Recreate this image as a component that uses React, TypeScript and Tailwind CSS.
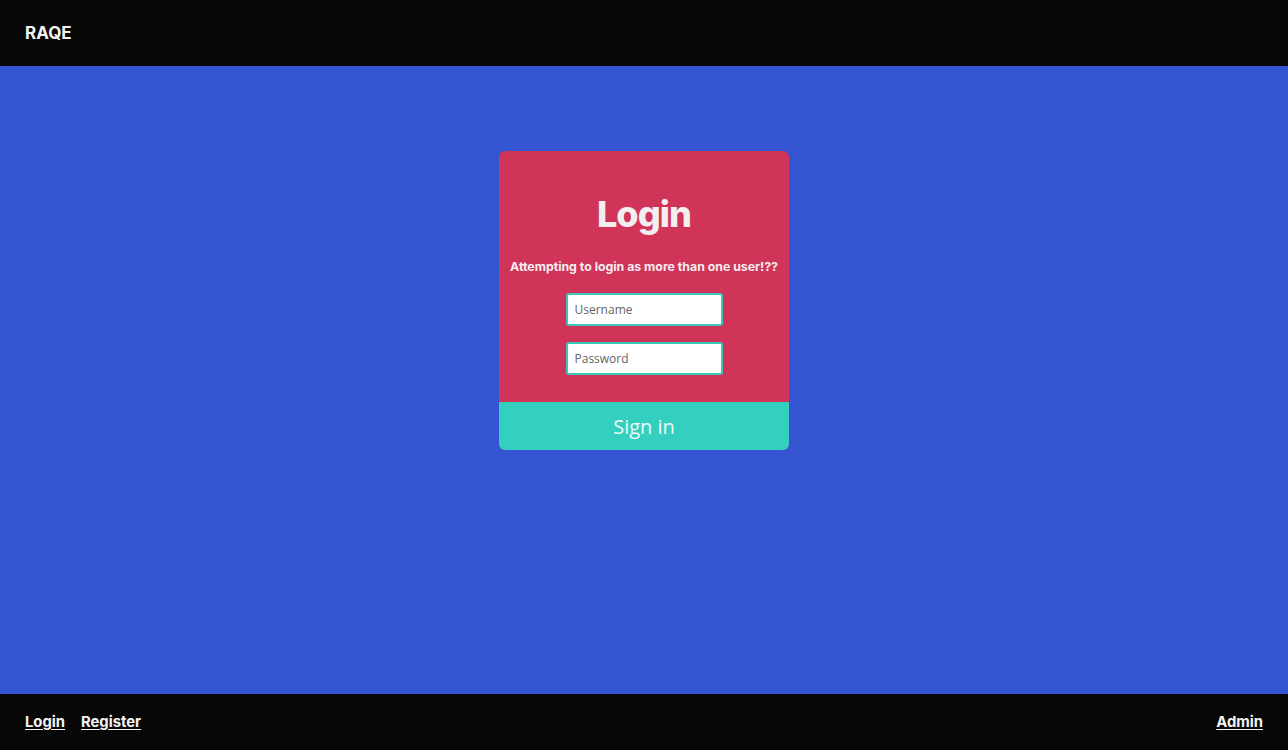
import React from "react";

export default function App() {
  const font = { fontFamily: "Inter, 'Noto Sans', sans-serif" };
  return (
    <div className="flex flex-col h-[750px] w-full bg-[#3555d2]" style={font}>
      <header className="h-[66px] bg-[#070707] flex items-center px-[25px] pt-[1px] shrink-0">
        <span className="text-[#f3f3f3] font-bold text-[17px] tracking-normal">RAQE</span>
      </header>
      <main className="flex-1 flex justify-center pt-[85px]">
        <div className="w-[290px] h-[299px] rounded-[6px] overflow-hidden bg-[#d03459] flex flex-col">
          <div className="flex-1 flex flex-col items-center">
            <h1 className="mt-[41px] text-[36px] leading-[44px] font-extrabold text-[#f3eef0] tracking-tight">Login</h1>
            <p className="mt-[22px] text-[12.3px] leading-[18px] font-bold text-[#f3eef0] whitespace-nowrap">Attempting to login as more than one user!??</p>
            <input
              placeholder="Username"
              className="mt-[17px] w-[157px] h-[33px] rounded-[3px] border-2 border-[#3ac8bb] bg-white px-[7px] text-[12px] text-[#555] placeholder-[#666] outline-none"
              style={{ fontFamily: "'Open Sans', 'Noto Sans', sans-serif" }}
            />
            <input
              placeholder="Password"
              type="password"
              className="mt-[16px] w-[157px] h-[33px] rounded-[3px] border-2 border-[#3ac8bb] bg-white px-[7px] text-[12px] text-[#555] placeholder-[#666] outline-none"
              style={{ fontFamily: "'Open Sans', 'Noto Sans', sans-serif" }}
            />
          </div>
          <button
            className="h-[48px] w-full bg-[#33d0bf] text-[#eef8f6] text-[20px] leading-[48px] pt-[1px] shrink-0"
            style={{ fontFamily: "'Open Sans', 'Noto Sans', sans-serif" }}
          >
            Sign in
          </button>
        </div>
      </main>
      <footer className="h-[56px] bg-[#070707] flex items-center justify-between px-[25px] shrink-0">
        <div className="flex gap-[16px]">
          <a className="text-[#f3f3f3] font-bold text-[14.8px] underline underline-offset-2">Login</a>
          <a className="text-[#f3f3f3] font-bold text-[14.8px] underline underline-offset-2">Register</a>
        </div>
        <a className="text-[#f3f3f3] font-bold text-[14.8px] underline underline-offset-2">Admin</a>
      </footer>
    </div>
  );
}
